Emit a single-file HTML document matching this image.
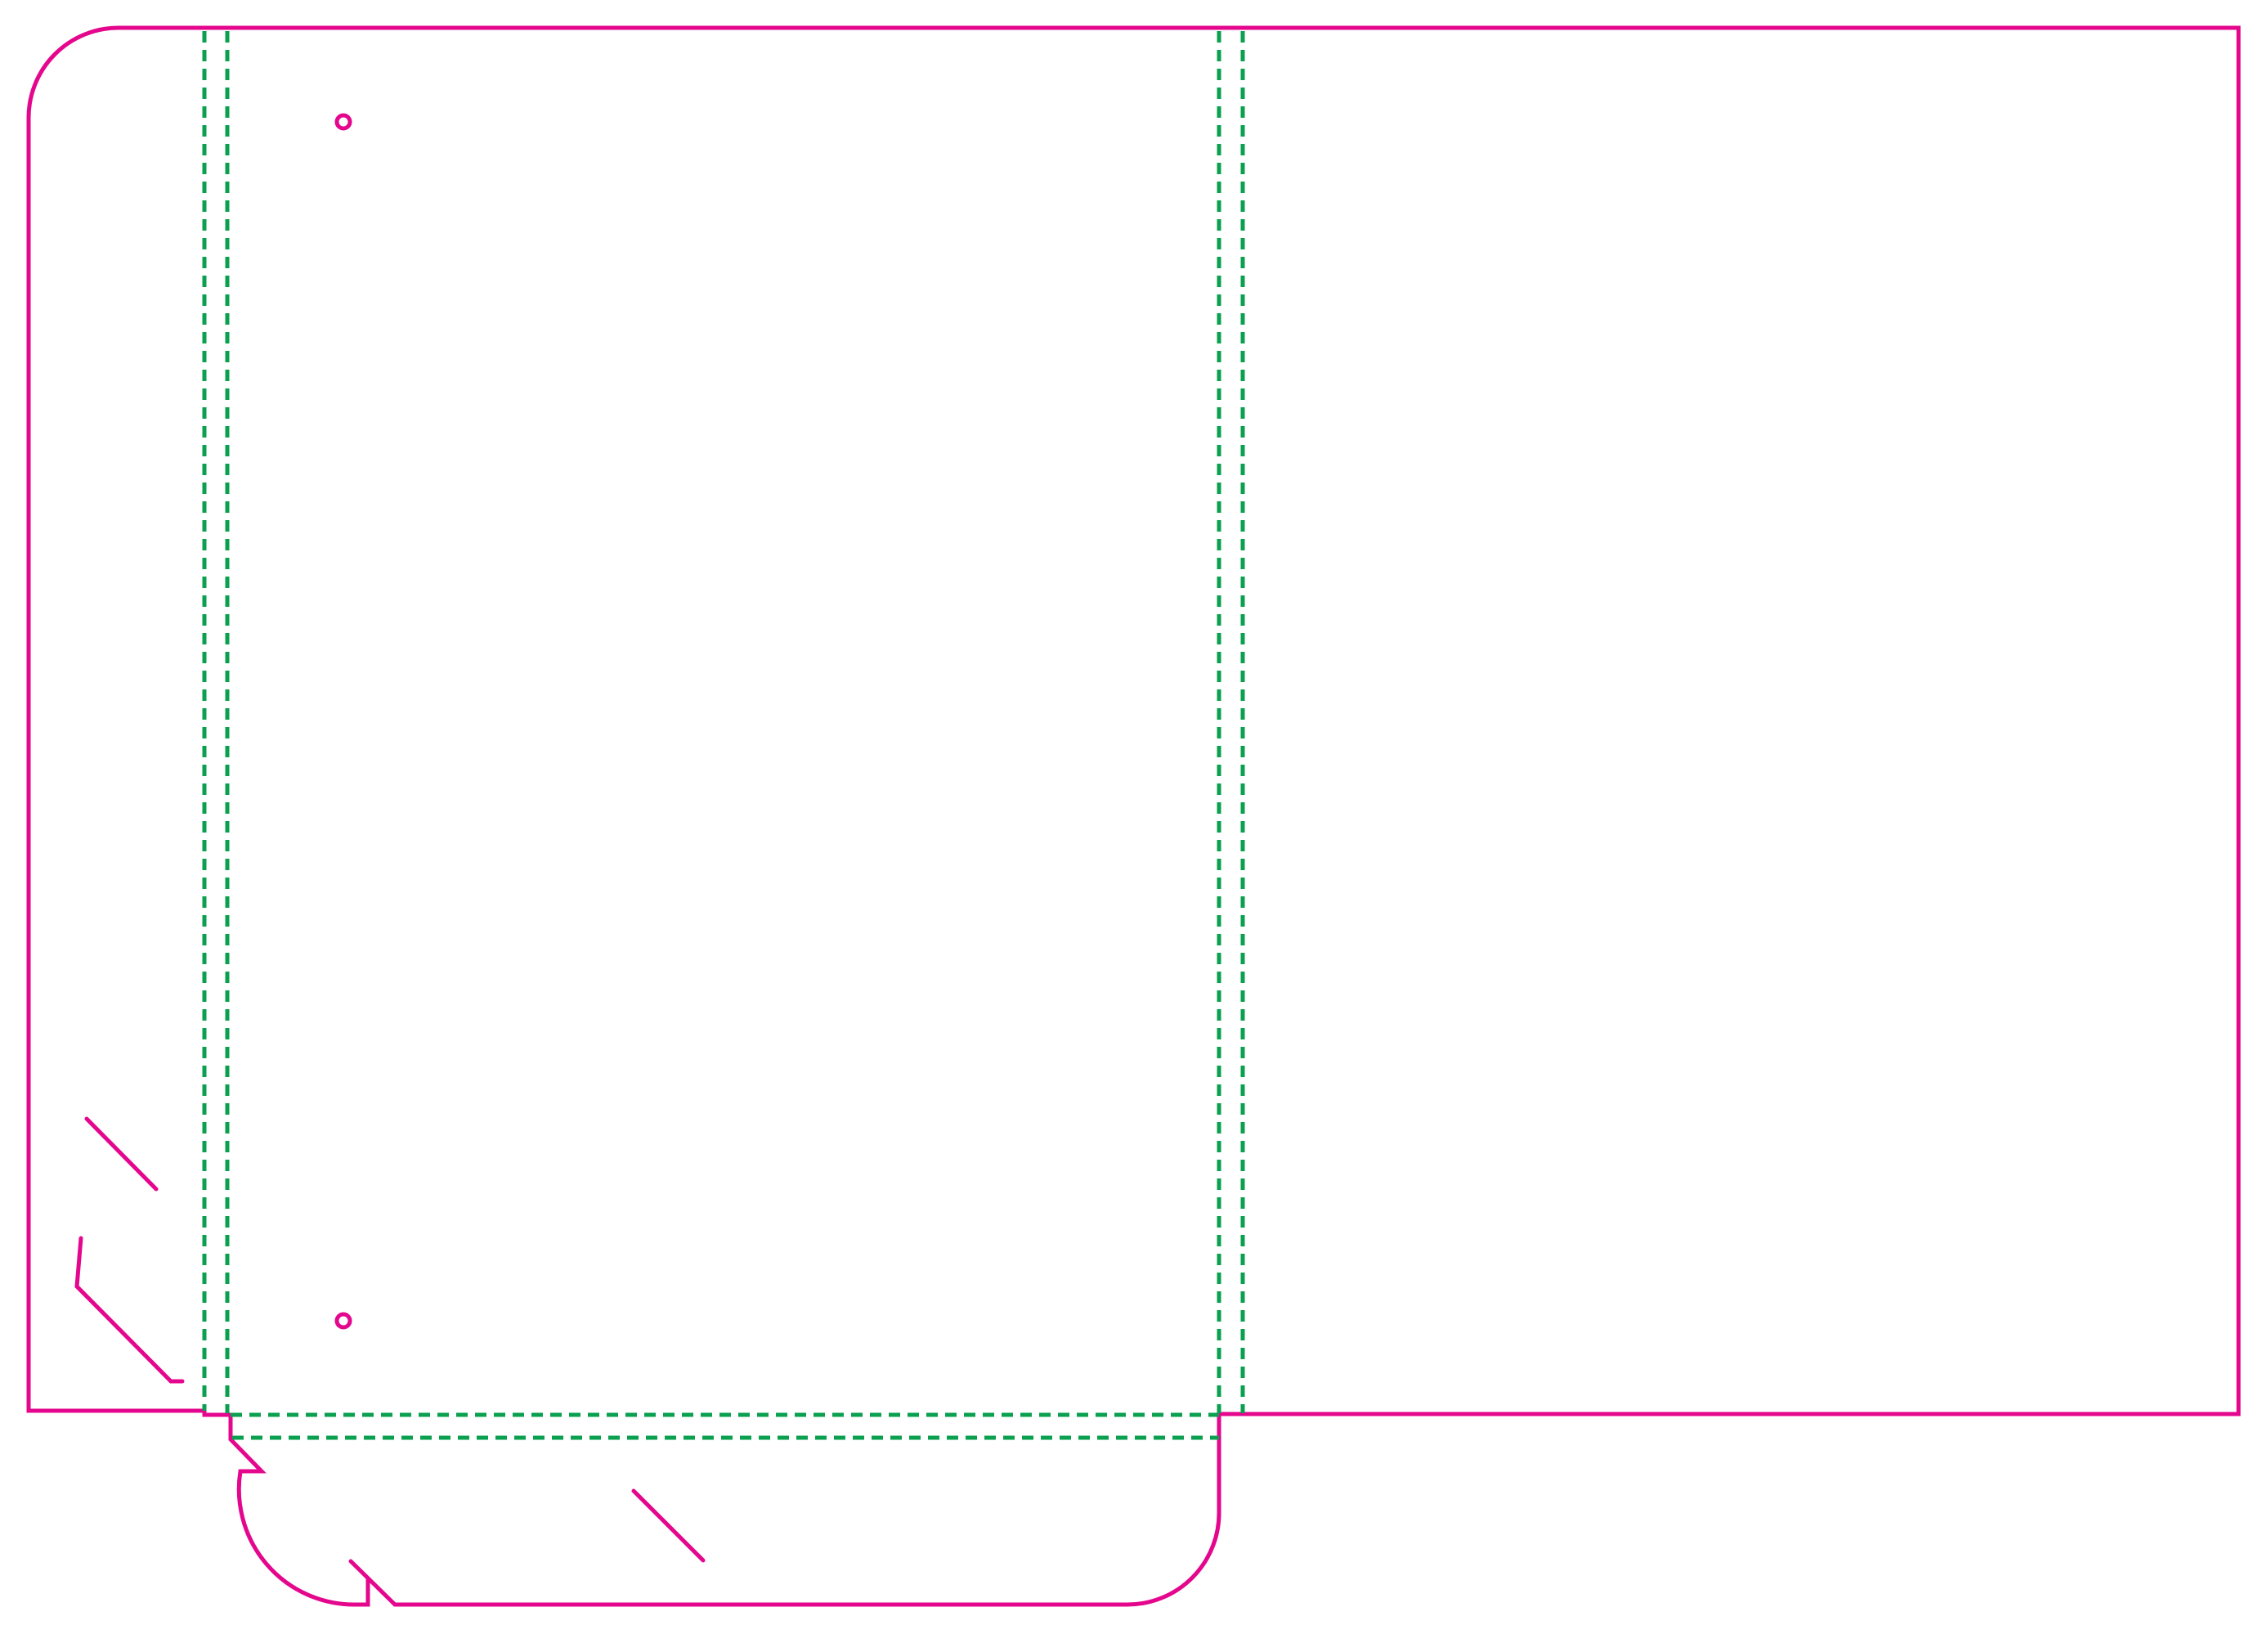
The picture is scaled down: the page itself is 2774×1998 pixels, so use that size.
<!DOCTYPE html>
<html><head><meta charset="utf-8"><style>
html,body{margin:0;padding:0;background:#fff;}
svg{display:block;}
</style></head><body>
<svg width="2774" height="1998" viewBox="0 0 2774 1998" xmlns="http://www.w3.org/2000/svg">
<g fill="none" stroke="#e4078d" stroke-width="5" stroke-linejoin="miter" stroke-linecap="round">
<path d="M250 1725 H35 V145 A110 110 0 0 1 145 34 H2738 V1729 H1491 V1848 A112 112 0 0 1 1379 1962 H483 L429 1909 M450 1930 V1962 H433 A141 141 0 0 1 294 1799 H320 L282 1760 V1730 H250 V1725"/>
<path d="M106 1368 L191 1454"/>
<path d="M99 1514 L94 1573 L209 1689 H223"/>
<path d="M775 1823 L860 1908"/>
<circle cx="420" cy="149" r="8"/>
<circle cx="420" cy="1615" r="8"/>
</g>
<g fill="none" stroke="#0aa04f" stroke-width="5" stroke-dasharray="14 9">
<path d="M250 38 V1725"/>
<path d="M278 38 V1728"/>
<path d="M1491 38 V1728"/>
<path d="M1520 38 V1728"/>
<path d="M282 1730 H1491"/>
<path d="M284 1758 H1491"/>
</g>
</svg>
</body></html>
